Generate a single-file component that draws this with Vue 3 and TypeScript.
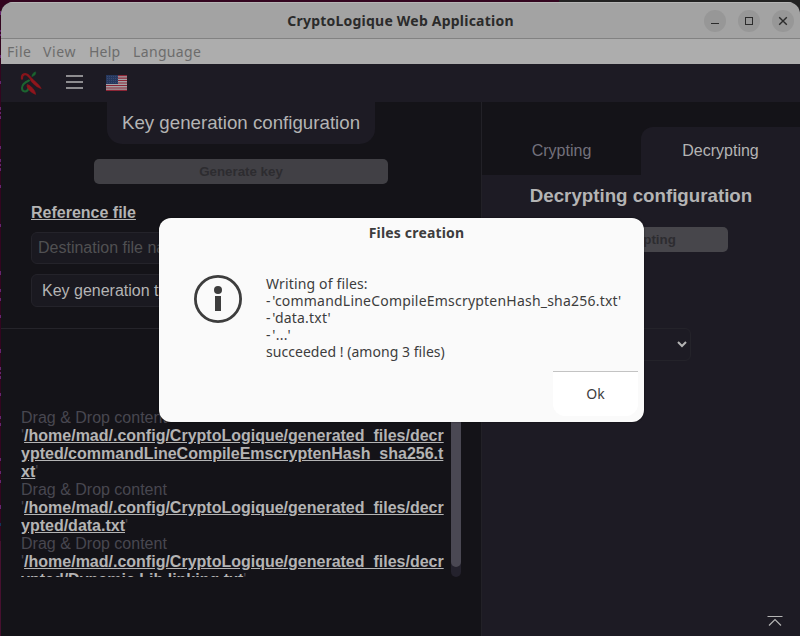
<script setup lang="ts">
interface DroppedFile {
  lines: string[]
}

const menus: { label: string; key: string }[] = [
  { label: 'File', key: 'file' },
  { label: 'View', key: 'view' },
  { label: 'Help', key: 'help' },
  { label: 'Language', key: 'language' },
]

const droppedFiles: DroppedFile[] = [
  {
    lines: [
      '/home/mad/.config/CryptoLogique/generated_files/decr',
      'ypted/commandLineCompileEmscryptenHash_sha256.t',
      'xt',
    ],
  },
  { lines: ['/home/mad/.config/CryptoLogique/generated_files/decr', 'ypted/data.txt'] },
  { lines: ['/home/mad/.config/CryptoLogique/generated_files/decr', 'ypted/Dynamic Lib linking.txt'] },
]

const messageLines: { text: string; kind: string }[] = [
  { text: 'Writing of files:', kind: 'intro' },
  { text: "- 'commandLineCompileEmscryptenHash_sha256.txt'", kind: 'entry' },
  { text: "- 'data.txt'", kind: 'entry' },
  { text: "- '...'", kind: 'entry' },
  { text: 'succeeded ! (among 3 files)', kind: 'outro' },
]
</script>

<template>
  <div class="desktop">
    <div class="window">
      <header class="titlebar">
        <span class="title">CryptoLogique Web Application</span>
        <div class="controls">
          <button class="control" aria-label="Minimize">
            <svg width="22" height="22" viewBox="0 0 22 22"><path d="M7 13.5h8" stroke="#2b2b2b" /></svg>
          </button>
          <button class="control" aria-label="Maximize">
            <svg width="22" height="22" viewBox="0 0 22 22">
              <rect x="7.5" y="7.5" width="7" height="7" fill="none" stroke="#2b2b2b" />
            </svg>
          </button>
          <button class="control" aria-label="Close">
            <svg width="22" height="22" viewBox="0 0 22 22">
              <path d="M7.2 7.2l7.6 7.6M14.8 7.2l-7.6 7.6" stroke="#2b2b2b" stroke-width="1.4" />
            </svg>
          </button>
        </div>
      </header>

      <nav class="menubar">
        <span v-for="m in menus" :key="m.key" :class="['menu', m.key]">{{ m.label }}</span>
      </nav>

      <div class="toolbar">
        <svg class="logo" width="22" height="24" viewBox="0 0 22 24" fill="none" stroke-linecap="round">
          <path d="M9 9.500C5.500 11 2 13 2 17C2 21.500 7.500 21.500 8.300 17.500" stroke="#1c6430" stroke-width="2" />
          <path d="M2 7.500C1.500 3 5.500 2.200 8.200 4.500C10.500 6.800 12 9 14 11" stroke="#86141b" stroke-width="2.300" />
          <path d="M11.500 7.500C14 9.500 19 13 21.300 17.500C18 17.300 12.500 12.500 10.500 9.500Z" fill="#8e161d" stroke="#8e161d" stroke-width=".5" />
          <path d="M7.500 13.500C11 14.500 15.500 19.500 15.700 23.500C12.500 22.500 8 19 7 15.500Z" fill="#8e161d" stroke="#8e161d" stroke-width=".5" />
          <path d="M12 5.500C11.600 3.500 13.200 1.600 15.600 .8C16.200 2.800 15 5 12 5.500" fill="#1c6430" stroke="#1c6430" stroke-width=".5" />
        </svg>
        <svg class="burger" width="17" height="15" viewBox="0 0 17 15">
          <path d="M0 1h17M0 7h17M0 13h17" stroke="#b4b4b4" stroke-width="1.5" />
        </svg>
        <svg class="flag" width="21" height="16" viewBox="0 0 21 16">
          <rect width="21" height="16" fill="#a4a2a6" />
          <path d="M0 .6h21M0 3.100h21M0 5.500h21M0 8h21M0 10.500h21M0 13h21M0 15.400h21" stroke="#8c2636" stroke-width="1.100" />
          <rect width="12" height="9" fill="#26385e" />
          <path d="M1 1.500h11M1 3.500h11M1 5.500h11M1 7.500h11" stroke="#43527a" stroke-width=".7" stroke-dasharray="1 1" />
        </svg>
      </div>

      <main class="body">
        <section class="left">
          <div class="keygen">
            <h2 class="card-title">Key generation configuration</h2>
            <button class="action">Generate key</button>
            <div class="form">
              <h3 class="reference">Reference file</h3>
              <div class="field placeholder">Destination file name</div>
              <div class="field select-field">Key generation type</div>
            </div>
          </div>
          <div class="drop">
            <div class="drop-list">
              <div class="drop-text">
                <div v-for="(file, i) in droppedFiles" :key="i" class="drop-item">
                  <div>Drag &amp; Drop content</div>
                  <div v-for="(line, j) in file.lines" :key="j" class="path-line"><span v-if="j === 0">'</span><b>{{ line }}</b><span v-if="j === file.lines.length - 1">'</span></div>
                </div>
              </div>
              <div class="track"><div class="thumb"></div></div>
            </div>
          </div>
        </section>

        <section class="right">
          <div class="tabs">
            <div class="tab">Crypting</div>
            <div class="tab active">Decrypting</div>
          </div>
          <div class="panel">
            <h2 class="panel-title">Decrypting configuration</h2>
            <button class="action decrypt">Decrypting</button>
            <div class="combo">
              <svg width="10" height="8" viewBox="0 0 10 8">
                <path d="M1 1L5 5L9 1" fill="none" stroke="#b4b4b4" stroke-width="2" />
              </svg>
            </div>
            <svg class="to-top" width="16" height="12" viewBox="0 0 16 12">
              <path d="M.5 1.500h15M2 10.500L8 4.500L14 10.500" fill="none" stroke="#b4b4b4" stroke-width="1.200" />
            </svg>
          </div>
        </section>
      </main>
    </div>

    <div class="dialog" role="dialog">
      <div class="dialog-title">Files creation</div>
      <div class="dialog-body">
        <svg class="info" width="48" height="48" viewBox="0 0 48 48">
          <circle cx="24" cy="24" r="22.600" fill="none" stroke="#3d3d3d" stroke-width="2.800" />
          <circle cx="24" cy="15" r="4" fill="#3d3d3d" />
          <rect x="21" y="21" width="6" height="15" fill="#3d3d3d" />
        </svg>
        <div class="message">
          <div v-for="line in messageLines" :key="line.text" :class="line.kind">{{ line.text }}</div>
        </div>
      </div>
      <button class="ok">Ok</button>
    </div>
  </div>
</template>

<style>
body {
  margin: 0;
  overflow: hidden;
}
</style>

<style scoped>
* {
  box-sizing: border-box;
}
button {
  border: 0;
  padding: 0;
  font: inherit;
}
h2,
h3 {
  margin: 0;
}
.desktop {
  position: relative;
  width: 800px;
  height: 636px;
  padding: 2px 0 0 1px;
  overflow: hidden;
  font-family: 'Liberation Sans', Arial, sans-serif;
  background:
    linear-gradient(#68246f, #68246f) 0 11px / 1px 4px no-repeat,
    linear-gradient(#68246f, #68246f) 0 30px / 1px 2px no-repeat,
    linear-gradient(#68246f, #68246f) 0 34px / 1px 2px no-repeat,
    linear-gradient(#68246f, #68246f) 0 55px / 1px 3px no-repeat,
    linear-gradient(#68246f, #68246f) 0 81px / 1px 3px no-repeat,
    linear-gradient(#68246f, #68246f) 0 107px / 1px 3px no-repeat,
    linear-gradient(#68246f, #68246f) 0 112px / 1px 2px no-repeat,
    linear-gradient(#68246f, #68246f) 0 116px / 1px 3px no-repeat,
    linear-gradient(#68246f, #68246f) 0 146px / 1px 3px no-repeat,
    linear-gradient(#68246f, #68246f) 0 159px / 1px 3px no-repeat,
    linear-gradient(#68246f, #68246f) 0 164px / 1px 2px no-repeat,
    linear-gradient(#68246f, #68246f) 0 168px / 1px 3px no-repeat,
    linear-gradient(#68246f, #68246f) 0 185px / 1px 3px no-repeat,
    linear-gradient(#68246f, #68246f) 0 224px / 1px 3px no-repeat,
    linear-gradient(#68246f, #68246f) 0 271px / 1px 4px no-repeat,
    linear-gradient(#68246f, #68246f) 0 289px / 1px 3px no-repeat,
    linear-gradient(#68246f, #68246f) 0 298px / 1px 3px no-repeat,
    linear-gradient(#68246f, #68246f) 0 315px / 1px 3px no-repeat,
    linear-gradient(#68246f, #68246f) 0 349px / 1px 4px no-repeat,
    linear-gradient(#68246f, #68246f) 0 367px / 1px 3px no-repeat,
    linear-gradient(#68246f, #68246f) 0 372px / 1px 2px no-repeat,
    linear-gradient(#68246f, #68246f) 0 376px / 1px 3px no-repeat,
    linear-gradient(#68246f, #68246f) 0 393px / 1px 3px no-repeat,
    linear-gradient(#68246f, #68246f) 0 416px / 1px 3px no-repeat,
    linear-gradient(#68246f, #68246f) 0 423px / 1px 3px no-repeat,
    linear-gradient(#68246f, #68246f) 0 458px / 1px 3px no-repeat,
    linear-gradient(#68246f, #68246f) 0 471px / 1px 3px no-repeat,
    linear-gradient(#68246f, #68246f) 0 480px / 1px 3px no-repeat,
    linear-gradient(#68246f, #68246f) 0 505px / 1px 4px no-repeat,
    linear-gradient(#153258, #153258) 0 523px / 1px 3px no-repeat,
    linear-gradient(#47102f, #47102f) 0 541px / 1px 95px no-repeat,
    linear-gradient(90deg, #33051f 559px, #222 559px);
}
.window {
  display: flex;
  flex-direction: column;
  width: 799px;
  height: 634px;
  overflow: hidden;
  border-radius: 12px 12px 0 0;
  background: #141318;
}
.titlebar {
  display: grid;
  grid-template-columns: 1fr auto 1fr;
  align-items: center;
  height: 37px;
  flex: none;
  padding-right: 6px;
  border-top: 1px solid #b5b5b5;
  border-bottom: 1px solid #828282;
  background: #a3a3a3;
}
.title {
  grid-column: 2;
  font: bold 14px/20px 'Noto Sans', sans-serif;
  letter-spacing: 0.22px;
  color: #2b2b2b;
  white-space: nowrap;
  margin-left: 6px;
}
.controls {
  display: flex;
  justify-content: flex-end;
  gap: 12px;
}
.control {
  width: 22px;
  height: 22px;
  border-radius: 50%;
  background: #979797;
}
.control svg,
.info {
  display: block;
}
.menubar {
  display: flex;
  height: 25px;
  flex: none;
  gap: 12px;
  padding-left: 6px;
  background: #adadad;
  font: 14px/25px 'Noto Sans', sans-serif;
  color: #6c6c6c;
}
.menu {
  white-space: nowrap;
}
.file {
  width: 24px;
  letter-spacing: 0.5px;
}
.view {
  width: 34px;
  letter-spacing: 0.6px;
}
.help {
  width: 32px;
  letter-spacing: 0.2px;
}
.language {
  width: 70px;
  letter-spacing: 0.35px;
}
.toolbar {
  display: flex;
  align-items: center;
  height: 38px;
  flex: none;
  padding-left: 19px;
  background: #1d1b24;
}
.burger {
  margin: 0 0 2px 23.5px;
}
.flag {
  margin-left: 23.5px;
}
.body {
  display: flex;
  flex: 1;
  min-height: 0;
}
.left {
  width: 481px;
  border-right: 1px solid #222127;
}
.keygen {
  display: flex;
  flex-direction: column;
  align-items: center;
  height: 227px;
  border-bottom: 1px solid #25242a;
}
.card-title {
  width: 268px;
  height: 42px;
  border-radius: 0 0 15px 15px;
  background: #1d1b24;
  color: #b4b4b4;
  font-size: 18.72px;
  font-weight: normal;
  line-height: 42px;
  text-align: center;
}
.action {
  width: 294px;
  height: 25px;
  margin-top: 15px;
  border-radius: 5px;
  background: #414045;
  color: #2d2c30;
  font-size: 13.333px;
  font-weight: bold;
  line-height: 25px;
}
.form {
  display: flex;
  flex-direction: column;
  align-self: stretch;
  padding: 20px 30px 0;
}
.reference {
  color: #b4b4b4;
  font-size: 16px;
  line-height: 18px;
  text-decoration: underline;
}
.field {
  height: 32px;
  margin-top: 10px;
  padding-left: 6px;
  border: 1px solid #24232a;
  border-radius: 6px;
  background: #1a1920;
  color: #505052;
  font-size: 16px;
  line-height: 30px;
}
.select-field {
  height: 33px;
  padding-left: 10px;
  color: #b4b4b4;
  line-height: 31px;
}
.drop {
  padding: 80px 20px 0;
}
.drop-list {
  display: flex;
  justify-content: space-between;
  width: 440px;
  height: 168px;
  overflow: hidden;
  color: #484750;
  font-size: 16px;
  line-height: 18px;
}
.drop-text {
  white-space: nowrap;
}
.path-line b {
  color: #b4b4b4;
  text-decoration: underline;
}
.track {
  width: 10px;
  height: 168px;
  border-radius: 5px;
  background: #24222d;
}
.thumb {
  height: 158px;
  border-radius: 5px;
  background: #4a4853;
}
.right {
  display: flex;
  flex-direction: column;
  width: 318px;
}
.tabs {
  display: flex;
  height: 73px;
  padding-top: 25px;
}
.tab {
  width: 159px;
  height: 48px;
  color: #73717c;
  font-size: 16px;
  line-height: 48px;
  text-align: center;
}
.tab.active {
  border-radius: 12px 0 0 0;
  background: #1d1b24;
  color: #b4b4b4;
}
.panel {
  display: flex;
  flex: 1;
  flex-direction: column;
  align-items: center;
  background: #1d1b24;
}
.panel-title {
  margin-top: 10px;
  color: #b4b4b4;
  font-size: 18.72px;
  line-height: 22px;
}
.decrypt {
  width: 174px;
  margin-top: 20px;
  background: #47464b;
}
.combo {
  display: flex;
  align-items: center;
  align-self: flex-start;
  justify-content: flex-end;
  width: 179px;
  height: 33px;
  margin: 76px 0 0 30px;
  padding-right: 3px;
  border: 1px solid #24232a;
  border-radius: 6px;
}
.to-top {
  margin: auto 17px 9px auto;
}
.dialog {
  position: absolute;
  top: 218px;
  left: 159px;
  display: flex;
  flex-direction: column;
  width: 485px;
  height: 204px;
  border-radius: 12px;
  background: #fafafa;
  box-shadow: 0 0 2px rgba(0, 0, 0, 0.6);
  color: #3d3d3d;
  font: 14px/17px 'Noto Sans', sans-serif;
}
.dialog-title {
  height: 57px;
  padding-top: 6px;
  padding-left: 30px;
  font-weight: bold;
  letter-spacing: 0.18px;
  text-align: center;
}
.dialog-body {
  display: flex;
  flex: 1;
  gap: 24px;
  padding-left: 35px;
}
.message {
  white-space: nowrap;
}
.intro {
  letter-spacing: 0.15px;
}
.entry {
  letter-spacing: 0.21px;
  word-spacing: -2.2px;
}
.outro {
  letter-spacing: 0.04px;
}
.ok {
  align-self: flex-end;
  width: 85px;
  height: 45px;
  margin: 0 6px 6px 0;
  padding-bottom: 2px;
  border-top: 1px solid #c3c3c3;
  border-radius: 0 0 12px 12px;
  background: #fff;
  color: #3d3d3d;
}
</style>
